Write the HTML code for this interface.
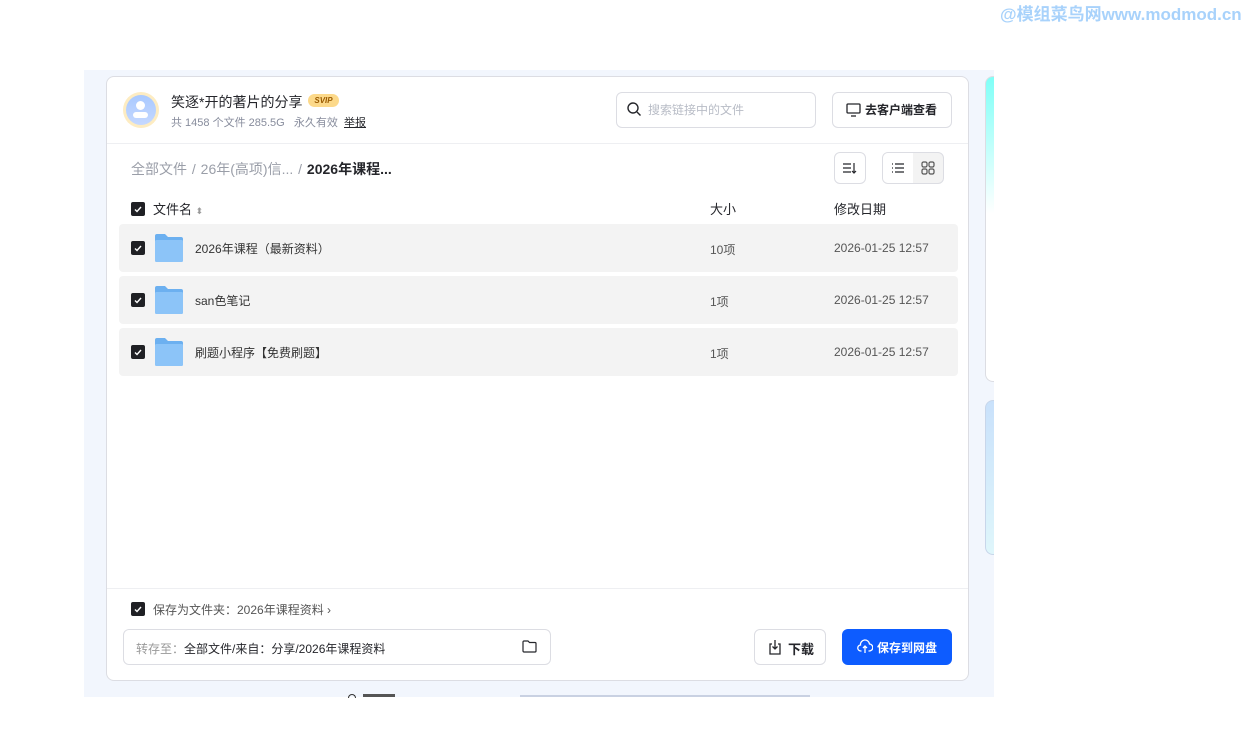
<!DOCTYPE html>
<html><head><meta charset="utf-8">
<style>
*{box-sizing:border-box;margin:0;padding:0}
body{width:1246px;height:749px;background:#fff;position:relative;overflow:hidden;font-family:"Liberation Sans","Noto Sans CJK SC",sans-serif;color:#25262b}
.a{position:absolute}
.bg{left:84px;top:70px;width:910px;height:627px;background:#f2f6fd}
.card{left:106px;top:76px;width:863px;height:605px;background:#fff;border:1px solid #dcdde3;border-radius:8px}
.cb{width:14px;height:14px;background:#1f2024;border-radius:2px;display:flex;align-items:center;justify-content:center}
.row{left:119px;width:839px;height:48px;background:#f3f3f3;border-radius:4px}
.row .cb{position:absolute;left:12px;top:17px}
.row .name{position:absolute;left:76px;top:16px;font-size:12px;color:#333}
.row .sz{position:absolute;left:591px;top:17px;font-size:12px;color:#555}
.row .dt{position:absolute;left:715px;top:17px;font-size:12px;color:#555}
.folder{position:absolute;left:35px;top:10px;width:30px;height:28px}
.btn{border:1px solid #dcdde3;border-radius:6px;background:#fff}
</style></head><body>
<div class="a" style="left:1000px;top:0;font-size:17px;font-weight:bold;color:#a8d2fb;letter-spacing:0">@模组菜鸟网www.modmod.cn</div>
<div class="a bg"></div>
<div class="a" style="left:985px;top:76px;width:9px;height:306px;border:1px solid #dcdde3;border-right:none;border-radius:8px 0 0 8px;background:linear-gradient(#80fff7,#fff 45%)"></div>
<div class="a" style="left:985px;top:400px;width:9px;height:155px;border:1px solid #c8d6ea;border-right:none;border-radius:8px 0 0 8px;background:linear-gradient(#c9e1fb,#dff6fb)"></div>
<div class="a card"></div>
<div class="a" style="left:123px;top:92px;width:36px;height:36px;border-radius:50%;background:#fdecc2;padding:3px"><div style="width:30px;height:30px;border-radius:50%;background:linear-gradient(#a9c9ff,#c5d8ff);position:relative"><div style="position:absolute;left:10px;top:6px;width:9px;height:9px;border-radius:50%;background:#fff"></div><div style="position:absolute;left:7px;top:17px;width:15px;height:6px;border-radius:3px;background:#fff"></div></div></div>
<div class="a" style="left:171px;top:92px;font-size:14px;color:#25262b">笑逐*开的著片的分享</div>
<div class="a" style="left:308px;top:94px;width:31px;height:13px;border-radius:7px;background:#fcd98a;font-size:8px;font-weight:bold;font-style:italic;color:#9a5a00;text-align:center;line-height:13px">SVIP</div>
<div class="a" style="left:171px;top:114px;font-size:11px;color:#878c9c">共 1458 个文件 285.5G &nbsp; 永久有效 &nbsp;<span style="color:#25262b;text-decoration:underline">举报</span></div>
<div class="a btn" style="left:616px;top:92px;width:200px;height:36px"></div>
<svg class="a" style="left:626px;top:101px" width="16" height="16" viewBox="0 0 16 16"><circle cx="7" cy="7" r="5" fill="none" stroke="#25262b" stroke-width="1.4"/><path d="M11 11l3.5 3.5" stroke="#25262b" stroke-width="1.4"/></svg>
<div class="a" style="left:648px;top:101px;font-size:12px;color:#b8bcc6">搜索链接中的文件</div>
<div class="a btn" style="left:832px;top:92px;width:120px;height:36px"></div>
<svg class="a" style="left:846px;top:103px" width="15" height="14" viewBox="0 0 15 14"><rect x="1" y="1" width="13" height="9" rx="1" fill="none" stroke="#25262b" stroke-width="1.3"/><path d="M5 13h5" stroke="#25262b" stroke-width="1.3"/></svg>
<div class="a" style="left:865px;top:101px;font-size:12px;font-weight:bold;color:#25262b">去客户端查看</div>
<div class="a" style="left:107px;top:143px;width:861px;height:1px;background:#eeeff2"></div>
<div class="a" style="left:131px;top:159px;font-size:14px;color:#9a9ea8">全部文件 <span style="margin:0 1px">/</span> 26年(高项)信... <span style="margin:0 1px">/</span> <span style="color:#25262b;font-weight:bold">2026年课程...</span></div>
<div class="a btn" style="left:834px;top:152px;width:32px;height:32px"></div>
<svg class="a" style="left:842px;top:161px" width="16" height="14" viewBox="0 0 16 14"><path d="M1 3h8M1 7h8M1 11h8M12 2v10M10 10l2 2 2-2" fill="none" stroke="#25262b" stroke-width="1.2"/></svg>
<div class="a btn" style="left:882px;top:152px;width:62px;height:32px;background:#f3f3f3;overflow:hidden"><div style="width:30px;height:30px;background:#fff"></div></div>
<svg class="a" style="left:891px;top:162px" width="14" height="12" viewBox="0 0 14 12"><path d="M1 2h1M4 2h9M1 6h1M4 6h9M1 10h1M4 10h9" stroke="#25262b" stroke-width="1.2"/></svg>
<svg class="a" style="left:921px;top:161px" width="14" height="14" viewBox="0 0 14 14"><rect x="1" y="1" width="5" height="5" rx="1.5" fill="none" stroke="#555" stroke-width="1.2"/><rect x="8" y="1" width="5" height="5" rx="1.5" fill="none" stroke="#555" stroke-width="1.2"/><rect x="1" y="8" width="5" height="5" rx="1.5" fill="none" stroke="#555" stroke-width="1.2"/><rect x="8" y="8" width="5" height="5" rx="1.5" fill="none" stroke="#555" stroke-width="1.2"/></svg>
<div class="a cb" style="left:131px;top:202px"><svg width="8" height="7" viewBox="0 0 8 7"><path d="M1 3.5l2 2 4-4.5" fill="none" stroke="#fff" stroke-width="1.4"/></svg></div>
<div class="a" style="left:153px;top:199px;font-size:13px;color:#25262b">文件名 <span style="font-size:9px;color:#999">⬍</span></div>
<div class="a" style="left:710px;top:199px;font-size:13px;color:#25262b">大小</div>
<div class="a" style="left:834px;top:199px;font-size:13px;color:#25262b">修改日期</div>
<div class="a row" style="top:224px"><div class="cb"><svg width="8" height="7" viewBox="0 0 8 7"><path d="M1 3.5l2 2 4-4.5" fill="none" stroke="#fff" stroke-width="1.4"/></svg></div>
<svg class="folder" viewBox="0 0 30 28"><path d="M1 2a2 2 0 012-2h8l3 3h13a2 2 0 012 2v21a2 2 0 01-2 2H3a2 2 0 01-2-2z" fill="#6cb0f0"/><rect x="1" y="6" width="28" height="22" rx="1.5" fill="#8cc4f8"/></svg>
<div class="name">2026年课程（最新资料）</div><div class="sz">10项</div><div class="dt">2026-01-25 12:57</div></div>
<div class="a row" style="top:276px"><div class="cb"><svg width="8" height="7" viewBox="0 0 8 7"><path d="M1 3.5l2 2 4-4.5" fill="none" stroke="#fff" stroke-width="1.4"/></svg></div>
<svg class="folder" viewBox="0 0 30 28"><path d="M1 2a2 2 0 012-2h8l3 3h13a2 2 0 012 2v21a2 2 0 01-2 2H3a2 2 0 01-2-2z" fill="#6cb0f0"/><rect x="1" y="6" width="28" height="22" rx="1.5" fill="#8cc4f8"/></svg>
<div class="name">san色笔记</div><div class="sz">1项</div><div class="dt">2026-01-25 12:57</div></div>
<div class="a row" style="top:328px"><div class="cb"><svg width="8" height="7" viewBox="0 0 8 7"><path d="M1 3.5l2 2 4-4.5" fill="none" stroke="#fff" stroke-width="1.4"/></svg></div>
<svg class="folder" viewBox="0 0 30 28"><path d="M1 2a2 2 0 012-2h8l3 3h13a2 2 0 012 2v21a2 2 0 01-2 2H3a2 2 0 01-2-2z" fill="#6cb0f0"/><rect x="1" y="6" width="28" height="22" rx="1.5" fill="#8cc4f8"/></svg>
<div class="name">刷题小程序【免费刷题】</div><div class="sz">1项</div><div class="dt">2026-01-25 12:57</div></div>
<div class="a" style="left:107px;top:588px;width:861px;height:1px;background:#eeeff2"></div>
<div class="a cb" style="left:131px;top:602px"><svg width="8" height="7" viewBox="0 0 8 7"><path d="M1 3.5l2 2 4-4.5" fill="none" stroke="#fff" stroke-width="1.4"/></svg></div>
<div class="a" style="left:153px;top:601px;font-size:12px;color:#555">保存为文件夹：2026年课程资料 ›</div>
<div class="a btn" style="left:123px;top:629px;width:428px;height:36px"></div>
<div class="a" style="left:136px;top:640px;font-size:12px;color:#999">转存至：<span style="color:#25262b">全部文件/来自：分享/2026年课程资料</span></div>
<svg class="a" style="left:522px;top:640px" width="15" height="13" viewBox="0 0 15 13"><path d="M1 2a1 1 0 011-1h4l1.5 1.5H13a1 1 0 011 1V11a1 1 0 01-1 1H2a1 1 0 01-1-1z" fill="none" stroke="#25262b" stroke-width="1.2"/></svg>
<div class="a btn" style="left:754px;top:629px;width:72px;height:36px"></div>
<svg class="a" style="left:768px;top:639px" width="14" height="16" viewBox="0 0 14 16"><path d="M4 5H2v10h10V5h-2M7 1v9M4.5 7.5L7 10l2.5-2.5" fill="none" stroke="#25262b" stroke-width="1.3"/></svg>
<div class="a" style="left:788px;top:639px;font-size:13px;font-weight:bold;color:#25262b">下载</div>
<div class="a" style="left:842px;top:629px;width:110px;height:36px;border-radius:6px;background:#0d5cff"></div>
<svg class="a" style="left:857px;top:639px" width="16" height="15" viewBox="0 0 16 15"><path d="M4.5 12H4a3 3 0 01-.5-6A4.5 4.5 0 0112.5 5 3.5 3.5 0 0112 12h-.5M8 7v7M6 9l2-2 2 2" fill="none" stroke="#fff" stroke-width="1.3"/></svg>
<div class="a" style="left:877px;top:639px;font-size:12px;font-weight:bold;color:#fff">保存到网盘</div>
<div class="a" style="left:348px;top:694px;width:8px;height:4px;border:1.5px solid #333;border-bottom:none;border-radius:4px 4px 0 0"></div>
<div class="a" style="left:363px;top:694px;width:32px;height:3px;background:#555"></div>
<div class="a" style="left:520px;top:695px;width:290px;height:2px;background:#b8c2d6;opacity:.7"></div>
</body></html>
